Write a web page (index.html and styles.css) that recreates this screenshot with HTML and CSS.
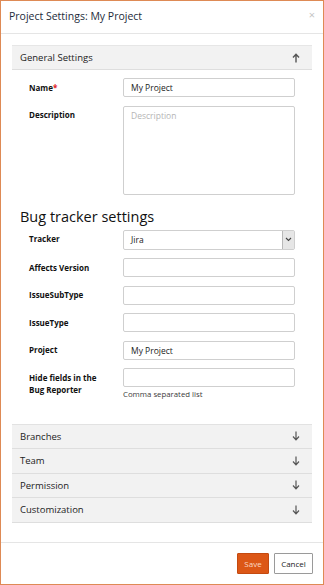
FILE: index.html
```html
<!DOCTYPE html>
<html lang="en">
<head>
    <meta charset="UTF-8">
    <meta name="viewport" content="width=device-width, initial-scale=1.0">
    <title>Project Settings: My Project</title>
    <link rel="stylesheet" href="styles.css">
</head>
<body>
    <div class="dialog">
        <div class="dialog-header">
            <span class="dialog-title">Project Settings: My Project</span>
            <span class="close">&times;</span>
        </div>

        <div class="dialog-body">
            <div class="panel open">
                <div class="panel-heading">
                    <span>General Settings</span>
                    <svg class="arrow" width="8" height="10" viewBox="0 0 8 10"><path d="M4 9.5V1.5M1 4.5L4 1.2L7 4.5" fill="none" stroke="#555" stroke-width="1.4"/></svg>
                </div>
                <div class="panel-body">
                    <div class="row">
                        <label>Name<span class="req">*</span></label>
                        <div class="input">My Project</div>
                    </div>
                    <div class="row">
                        <label>Description</label>
                        <div class="input textarea placeholder">Description</div>
                    </div>

                    <h2>Bug tracker settings</h2>

                    <div class="row">
                        <label>Tracker</label>
                        <div class="input select">
                            <span>Jira</span>
                            <span class="select-btn">
                                <svg width="7" height="5" viewBox="0 0 7 5"><path d="M1 1L3.5 3.5L6 1" fill="none" stroke="#444" stroke-width="1.1"/></svg>
                            </span>
                        </div>
                    </div>
                    <div class="row">
                        <label>Affects Version</label>
                        <div class="input"></div>
                    </div>
                    <div class="row">
                        <label>IssueSubType</label>
                        <div class="input"></div>
                    </div>
                    <div class="row">
                        <label>IssueType</label>
                        <div class="input"></div>
                    </div>
                    <div class="row">
                        <label>Project</label>
                        <div class="input">My Project</div>
                    </div>
                    <div class="row">
                        <label>Hide fields in the<br>Bug Reporter</label>
                        <div class="field">
                            <div class="input"></div>
                            <div class="help">Comma separated list</div>
                        </div>
                    </div>
                </div>
            </div>

            <div class="panel-group">
                <div class="panel-heading">
                    <span>Branches</span>
                    <svg class="arrow" width="8" height="10" viewBox="0 0 8 10"><path d="M4 0.5V8.5M1 5.5L4 8.8L7 5.5" fill="none" stroke="#555" stroke-width="1.2"/></svg>
                </div>
                <div class="panel-heading">
                    <span>Team</span>
                    <svg class="arrow" width="8" height="10" viewBox="0 0 8 10"><path d="M4 0.5V8.5M1 5.5L4 8.8L7 5.5" fill="none" stroke="#555" stroke-width="1.2"/></svg>
                </div>
                <div class="panel-heading">
                    <span>Permission</span>
                    <svg class="arrow" width="8" height="10" viewBox="0 0 8 10"><path d="M4 0.5V8.5M1 5.5L4 8.8L7 5.5" fill="none" stroke="#555" stroke-width="1.2"/></svg>
                </div>
                <div class="panel-heading">
                    <span>Customization</span>
                    <svg class="arrow" width="8" height="10" viewBox="0 0 8 10"><path d="M4 0.5V8.5M1 5.5L4 8.8L7 5.5" fill="none" stroke="#555" stroke-width="1.2"/></svg>
                </div>
            </div>
        </div>

        <div class="dialog-footer">
            <button class="btn btn-save">Save</button>
            <button class="btn btn-cancel">Cancel</button>
        </div>
    </div>
</body>
</html>
```

FILE: styles.css
```css
* { box-sizing: border-box; }
body { margin: 0; background: #fff; font-family: "Open Sans", "Liberation Sans", sans-serif; color: #222; }

.dialog { width: 324px; height: 585px; border: 1px solid #de8a55; display: flex; flex-direction: column; background: #fff; }

.dialog-header { height: 33px; border-bottom: 1px solid #e5e5e5; display: flex; align-items: center; justify-content: space-between; padding: 0 8px 2px 8px; }
.dialog-title { font-size: 10.5px; color: #1d2b3a; }
.close { font-size: 11px; color: #c4c4c4; margin-top: -4px; }

.dialog-body { flex: 1; padding: 11px 11px 0 11px; }

.panel-heading { height: 24.5px; background: #f2f2f2; border-bottom: 1px solid #dedede; display: flex; align-items: center; justify-content: space-between; padding: 0 12px 0 8px; font-size: 9.5px; color: #222; }
.panel.open .panel-heading { border-top: 1px solid #e6e6e6; height: 25px; }
.arrow { display: block; }

.panel-body { padding: 8px 17px 16px 17px; }

.row { display: flex; align-items: flex-start; margin-bottom: 8.5px; }
.row label { width: 94px; flex: none; font-size: 8px; font-weight: 700; line-height: 12px; padding-top: 3.5px; color: #111; }
.req { color: #e0201c; }

.input { flex: 1; height: 19px; border: 1px solid #cfcfcf; border-radius: 2px; font-size: 8.5px; line-height: 17px; padding: 0 7px; color: #222; }
.textarea { height: 89px; line-height: 12px; padding-top: 3px; }
.placeholder { color: #b5b5b5; }
.select { height: 20px; line-height: 18px; display: flex; justify-content: space-between; padding-right: 0; }
.select-btn { width: 12px; background: #e6e6e6; border-left: 1px solid #b8b8b8; display: flex; align-items: center; justify-content: center; }

.field { flex: 1; }
.field .input { width: 100%; }
.help { font-size: 7.8px; color: #3a3a3a; margin-top: 2px; }

h2 { font-size: 14.5px; font-weight: 400; margin: 13px 0 4px -9px; color: #111; line-height: 18px; }

.panel-group { border-top: 1px solid #e2e2e2; }

.dialog-footer { height: 42px; border-top: 1px solid #e5e5e5; display: flex; justify-content: flex-end; align-items: flex-start; gap: 5px; padding: 10px 10px 0 0; }
.btn { height: 21px; font-family: "Open Sans", "Liberation Sans", sans-serif; font-size: 8px; border-radius: 1px; padding: 0 8px; }
.btn-save { background: #dc5716; border: 1px solid #c44a10; color: #fbd9c6; width: 32px; padding: 0; }
.btn-cancel { background: #fff; border: 1px solid #9a9a9a; color: #222; width: 39px; padding: 0; }
```
